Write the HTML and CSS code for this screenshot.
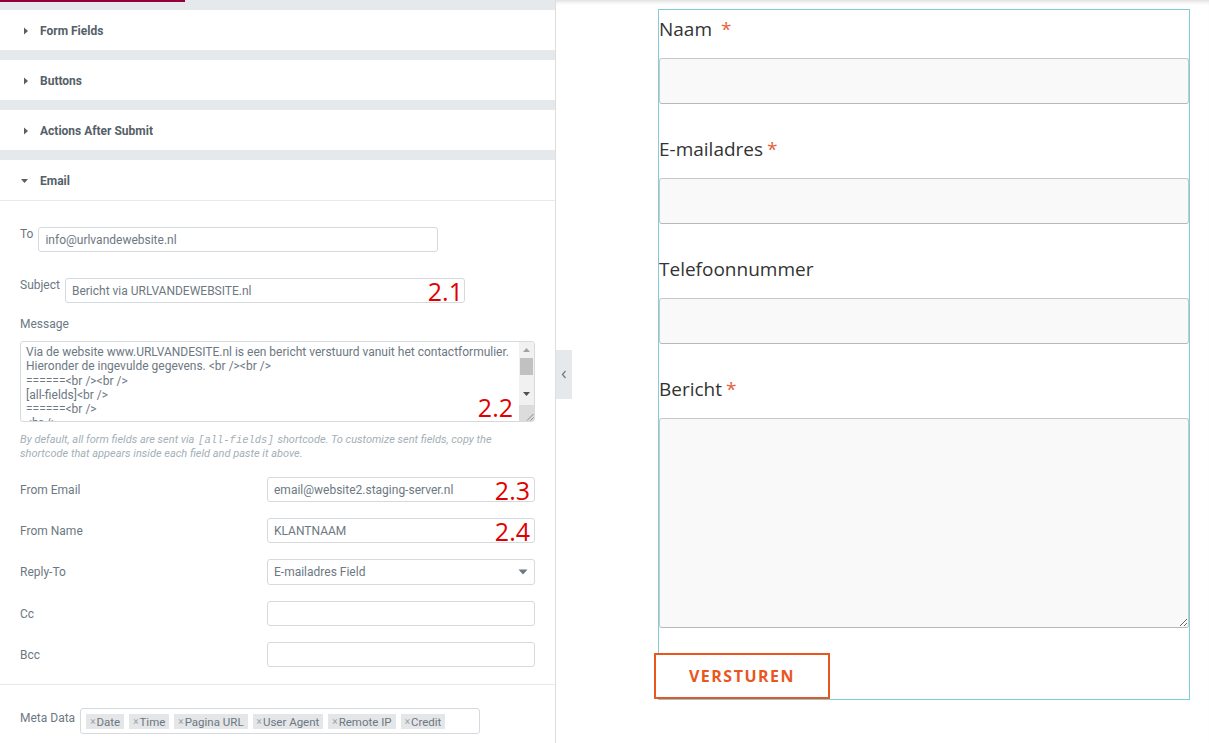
FILE: index.html
```html
<!DOCTYPE html>
<html lang="nl">
<head>
  <meta charset="UTF-8">
  <meta name="viewport" content="width=device-width, initial-scale=1.0">
  <title>Contactformulier – Email instellingen</title>
  <link rel="stylesheet" href="styles.css">
</head>
<body>
  <div class="editor">
    <aside class="panel">
      <div class="panel-tabs"><span class="tab-active"></span></div>

      <div class="section">
        <div class="section-head">
          <svg class="caret" width="10" height="10" viewBox="0 0 10 10"><polygon points="3,1.5 7,5 3,8.5"/></svg>
          Form Fields
        </div>
      </div>
      <div class="section">
        <div class="section-head">
          <svg class="caret" width="10" height="10" viewBox="0 0 10 10"><polygon points="3,1.5 7,5 3,8.5"/></svg>
          Buttons
        </div>
      </div>
      <div class="section">
        <div class="section-head">
          <svg class="caret" width="10" height="10" viewBox="0 0 10 10"><polygon points="3,1.5 7,5 3,8.5"/></svg>
          Actions After Submit
        </div>
      </div>

      <div class="section open">
        <div class="section-head">
          <svg class="caret" width="10" height="10" viewBox="0 0 10 10"><polygon points="0,3 7,3 3.5,7"/></svg>
          Email
        </div>
        <div class="section-body">
          <div class="control inline">
            <label>To</label>
            <input class="text-input w400" type="text" value="info@urlvandewebsite.nl">
          </div>
          <div class="control inline">
            <label>Subject</label>
            <div class="annotated">
              <input class="text-input w400" type="text" value="Bericht via URLVANDEWEBSITE.nl">
              <span class="step step-subject">2.1</span>
            </div>
          </div>
          <div class="control block">
            <label>Message</label>
            <div class="annotated">
              <textarea class="message" spellcheck="false">Via de website www.URLVANDESITE.nl is een bericht verstuurd vanuit het contactformulier. Hieronder de ingevulde gegevens. &lt;br /&gt;&lt;br /&gt;
======&lt;br /&gt;&lt;br /&gt;
[all-fields]&lt;br /&gt;
======&lt;br /&gt;
&lt;br /&gt;</textarea>
              <div class="scrollbar">
                <span class="sb-btn"><svg width="7" height="4" viewBox="0 0 7 4"><polygon points="0,4 7,4 3.5,0" fill="#a3a3a3"/></svg></span>
                <span class="sb-track"><span class="sb-thumb"></span></span>
                <span class="sb-btn"><svg width="7" height="4" viewBox="0 0 7 4"><polygon points="0,0 7,0 3.5,4" fill="#505050"/></svg></span>
                <span class="sb-gap"></span>
                <span class="sb-corner"><svg width="9" height="9" viewBox="0 0 9 9"><path d="M8.5 2 L2 8.5 M8.5 5.5 L5.5 8.5" stroke="#8a8a8a" stroke-width="1"/></svg></span>
              </div>
              <span class="step step-message">2.2</span>
            </div>
            <p class="hint">By default, all form fields are sent via <code>[all-fields]</code> shortcode. To customize sent fields, copy the shortcode that appears inside each field and paste it above.</p>
          </div>

          <div class="control row">
            <label>From Email</label>
            <div class="annotated">
              <input class="text-input w268" type="text" value="email@website2.staging-server.nl">
              <span class="step step-input">2.3</span>
            </div>
          </div>
          <div class="control row">
            <label>From Name</label>
            <div class="annotated">
              <input class="text-input w268" type="text" value="KLANTNAAM">
              <span class="step step-input">2.4</span>
            </div>
          </div>
          <div class="control row">
            <label>Reply-To</label>
            <div class="select-wrap">
              <select class="text-input w268">
                <option>E-mailadres Field</option>
              </select>
              <svg class="select-caret" width="10" height="6" viewBox="0 0 10 6"><polygon points="0.5,0.5 9.5,0.5 5,5.5"/></svg>
            </div>
          </div>
          <div class="control row">
            <label>Cc</label>
            <input class="text-input w268" type="text">
          </div>
          <div class="control row">
            <label>Bcc</label>
            <input class="text-input w268" type="text">
          </div>
        </div>

        <div class="section-body meta">
          <div class="control inline">
            <label>Meta Data</label>
            <div class="tag-box">
              <span class="tag"><i>×</i>Date</span>
              <span class="tag"><i>×</i>Time</span>
              <span class="tag"><i>×</i>Pagina URL</span>
              <span class="tag"><i>×</i>User Agent</span>
              <span class="tag"><i>×</i>Remote IP</span>
              <span class="tag"><i>×</i>Credit</span>
            </div>
          </div>
        </div>
      </div>
    </aside>

    <main class="preview">
      <button class="panel-toggle" type="button" title="Hide panel">
        <svg width="6" height="9" viewBox="0 0 6 9"><polyline points="4.5,1 1.5,4.5 4.5,8" fill="none" stroke="#6d7882" stroke-width="1.2"/></svg>
      </button>

      <form class="contact-form">
        <div class="form-field required">
          <label class="field-label">Naam </label>
          <input class="form-input" type="text">
        </div>
        <div class="form-field required">
          <label class="field-label">E-mailadres</label>
          <input class="form-input" type="email">
        </div>
        <div class="form-field">
          <label class="field-label">Telefoonnummer</label>
          <input class="form-input" type="tel">
        </div>
        <div class="form-field required last">
          <label class="field-label">Bericht</label>
          <textarea class="form-input form-textarea"></textarea>
        </div>
        <button class="submit" type="button">VERSTUREN</button>
      </form>
    </main>
  </div>
</body>
</html>
```

FILE: styles.css
```css
body {
  margin: 0;
  font-family: Roboto, "Liberation Sans", Arial, sans-serif;
  font-size: 12px;
  overflow: hidden;
}
.editor {
  display: flex;
  height: 743px;
}

/* editor panel */
.panel {
  width: 555px;
  flex: none;
  background: #e6e9ec;
  border-right: 1px solid #dcdfe2;
  overflow: hidden;
}
.panel-tabs {
  height: 10px;
}
.tab-active {
  display: block;
  width: 185px;
  height: 2px;
  background: #93003f;
}
.section {
  background: #fff;
  margin-bottom: 10px;
}
.section-head {
  height: 40px;
  box-sizing: border-box;
  padding: 1px 0 0 21px;
  display: flex;
  align-items: center;
  font-weight: 700;
  color: #556068;
}
.caret {
  fill: #556068;
  margin-right: 9px;
}
.section.open .section-head {
  border-bottom: 1px solid #e6e9ec;
  height: 41px;
}
.section-body {
  padding: 26px 20px 17px;
}
.section-body.meta {
  border-top: 1px solid #e6e9ec;
  padding-top: 25px;
}
.control label {
  color: #6d7882;
  line-height: 14px;
}
.control.inline {
  display: flex;
  align-items: flex-start;
  gap: 5px;
  margin-bottom: 26px;
}
.control.block {
  margin-top: -12px;
}
.control.block label {
  display: block;
  margin-bottom: 10px;
}
.control.row {
  display: flex;
  align-items: center;
  justify-content: space-between;
  margin-bottom: 16px;
}
.control.row:last-child {
  margin-bottom: 0;
}
.text-input {
  box-sizing: border-box;
  height: 25px;
  border: 1px solid #d5dadf;
  border-radius: 3px;
  padding: 0 6px;
  font-family: Roboto, "Liberation Sans", Arial, sans-serif;
  font-size: 12px;
  color: #6d7882;
  background: #fff;
  outline: none;
}
.w400 { width: 400px; }
.w268 { width: 268px; }
.annotated {
  position: relative;
}
.step {
  position: absolute;
  font-family: "Open Sans", sans-serif;
  font-size: 25px;
  line-height: 26px;
  color: #e10000;
  pointer-events: none;
}
.step-input {
  top: 0;
  right: 5px;
}
.step-subject {
  top: 0;
  right: 2px;
}
.step-message {
  top: 53px;
  right: 22px;
}
.message {
  display: block;
  box-sizing: border-box;
  width: 515px;
  height: 81px;
  margin: 0;
  padding: 3px 20px 3px 5px;
  border: 1px solid #d5dadf;
  border-radius: 3px;
  font-family: Roboto, "Liberation Sans", Arial, sans-serif;
  font-size: 12px;
  line-height: 14.3px;
  color: #6d7882;
  overflow: hidden;
  resize: none;
  outline: none;
}
.scrollbar {
  position: absolute;
  top: 1px;
  right: 1px;
  bottom: 1px;
  width: 15px;
  display: flex;
  flex-direction: column;
  background: #f1f1f1;
}
.sb-btn {
  height: 15px;
  flex: none;
  display: flex;
  align-items: center;
  justify-content: center;
}
.sb-track {
  flex: 1;
  padding-top: 1px;
}
.sb-thumb {
  display: block;
  margin: 0 1px;
  height: 17px;
  background: #c1c1c1;
}
.sb-gap {
  height: 4px;
}
.sb-corner {
  height: 16px;
  flex: none;
  background: #dcdcdc;
  display: flex;
  align-items: flex-end;
  justify-content: flex-end;
}
.hint {
  margin: 11px 0 16px;
  font-size: 11px;
  line-height: 14px;
  font-style: italic;
  color: #a4afb7;
}
.hint code {
  font-family: "Liberation Mono", monospace;
  font-size: 10.5px;
  padding: 0 1px;
}
.select-wrap {
  position: relative;
}
.select-wrap select {
  appearance: none;
  -webkit-appearance: none;
  height: 26px;
  display: block;
}
.select-caret {
  position: absolute;
  right: 7px;
  top: 10px;
  fill: #6d7882;
}
.tag-box {
  box-sizing: border-box;
  width: 400px;
  height: 26px;
  border: 1px solid #d5dadf;
  border-radius: 3px;
  padding: 5px;
  display: flex;
  gap: 5px;
  margin-top: -2px;
}
.meta .control label {
  padding-top: 1px;
}
.tag {
  display: inline-flex;
  align-items: center;
  height: 15px;
  padding: 0 4px;
  background: #e4e6e8;
  color: #6d7882;
  font-size: 11.5px;
}
.tag i {
  font-style: normal;
  font-size: 10px;
  color: #9aa3ab;
  margin-right: 1px;
}

/* preview */
.preview {
  flex: 1;
  position: relative;
  background: #fff;
  box-shadow: inset 0 5px 5px -4px rgba(0, 0, 0, 0.18);
  padding: 9px 19px 0 102px;
}
.panel-toggle {
  position: absolute;
  left: 0;
  top: 350px;
  width: 16px;
  height: 49px;
  padding: 0;
  border: none;
  background: #e6e9ec;
  display: flex;
  align-items: center;
  justify-content: center;
}
.contact-form {
  border: 1px solid #80ccd8;
  display: flex;
  flex-direction: column;
  font-family: "Open Sans", sans-serif;
}
.form-field {
  display: flex;
  flex-direction: column;
  margin-bottom: 26px;
}
.form-field.last {
  margin-bottom: 25px;
}
.field-label {
  font-size: 19px;
  line-height: 38px;
  color: #333;
  margin-bottom: 10px;
  white-space: pre;
}
.form-field.required .field-label::after {
  content: "*";
  color: #e8603c;
  padding-left: 4px;
}
.form-input {
  box-sizing: border-box;
  height: 46px;
  margin: 0;
  border: 1px solid #c8c8c8;
  border-bottom-color: #b8b8b8;
  border-radius: 3px;
  background: #f9f9f9;
  font-family: "Open Sans", sans-serif;
  font-size: 16px;
  outline: none;
}
.form-textarea {
  height: 210px;
}
.submit {
  align-self: flex-start;
  margin-left: -5px;
  width: 176px;
  height: 46px;
  border: 2px solid #e9571f;
  background: #fff;
  color: #e9571f;
  font-family: "Open Sans", sans-serif;
  font-weight: 700;
  font-size: 16px;
  letter-spacing: 1.5px;
  padding: 0;
}
```
